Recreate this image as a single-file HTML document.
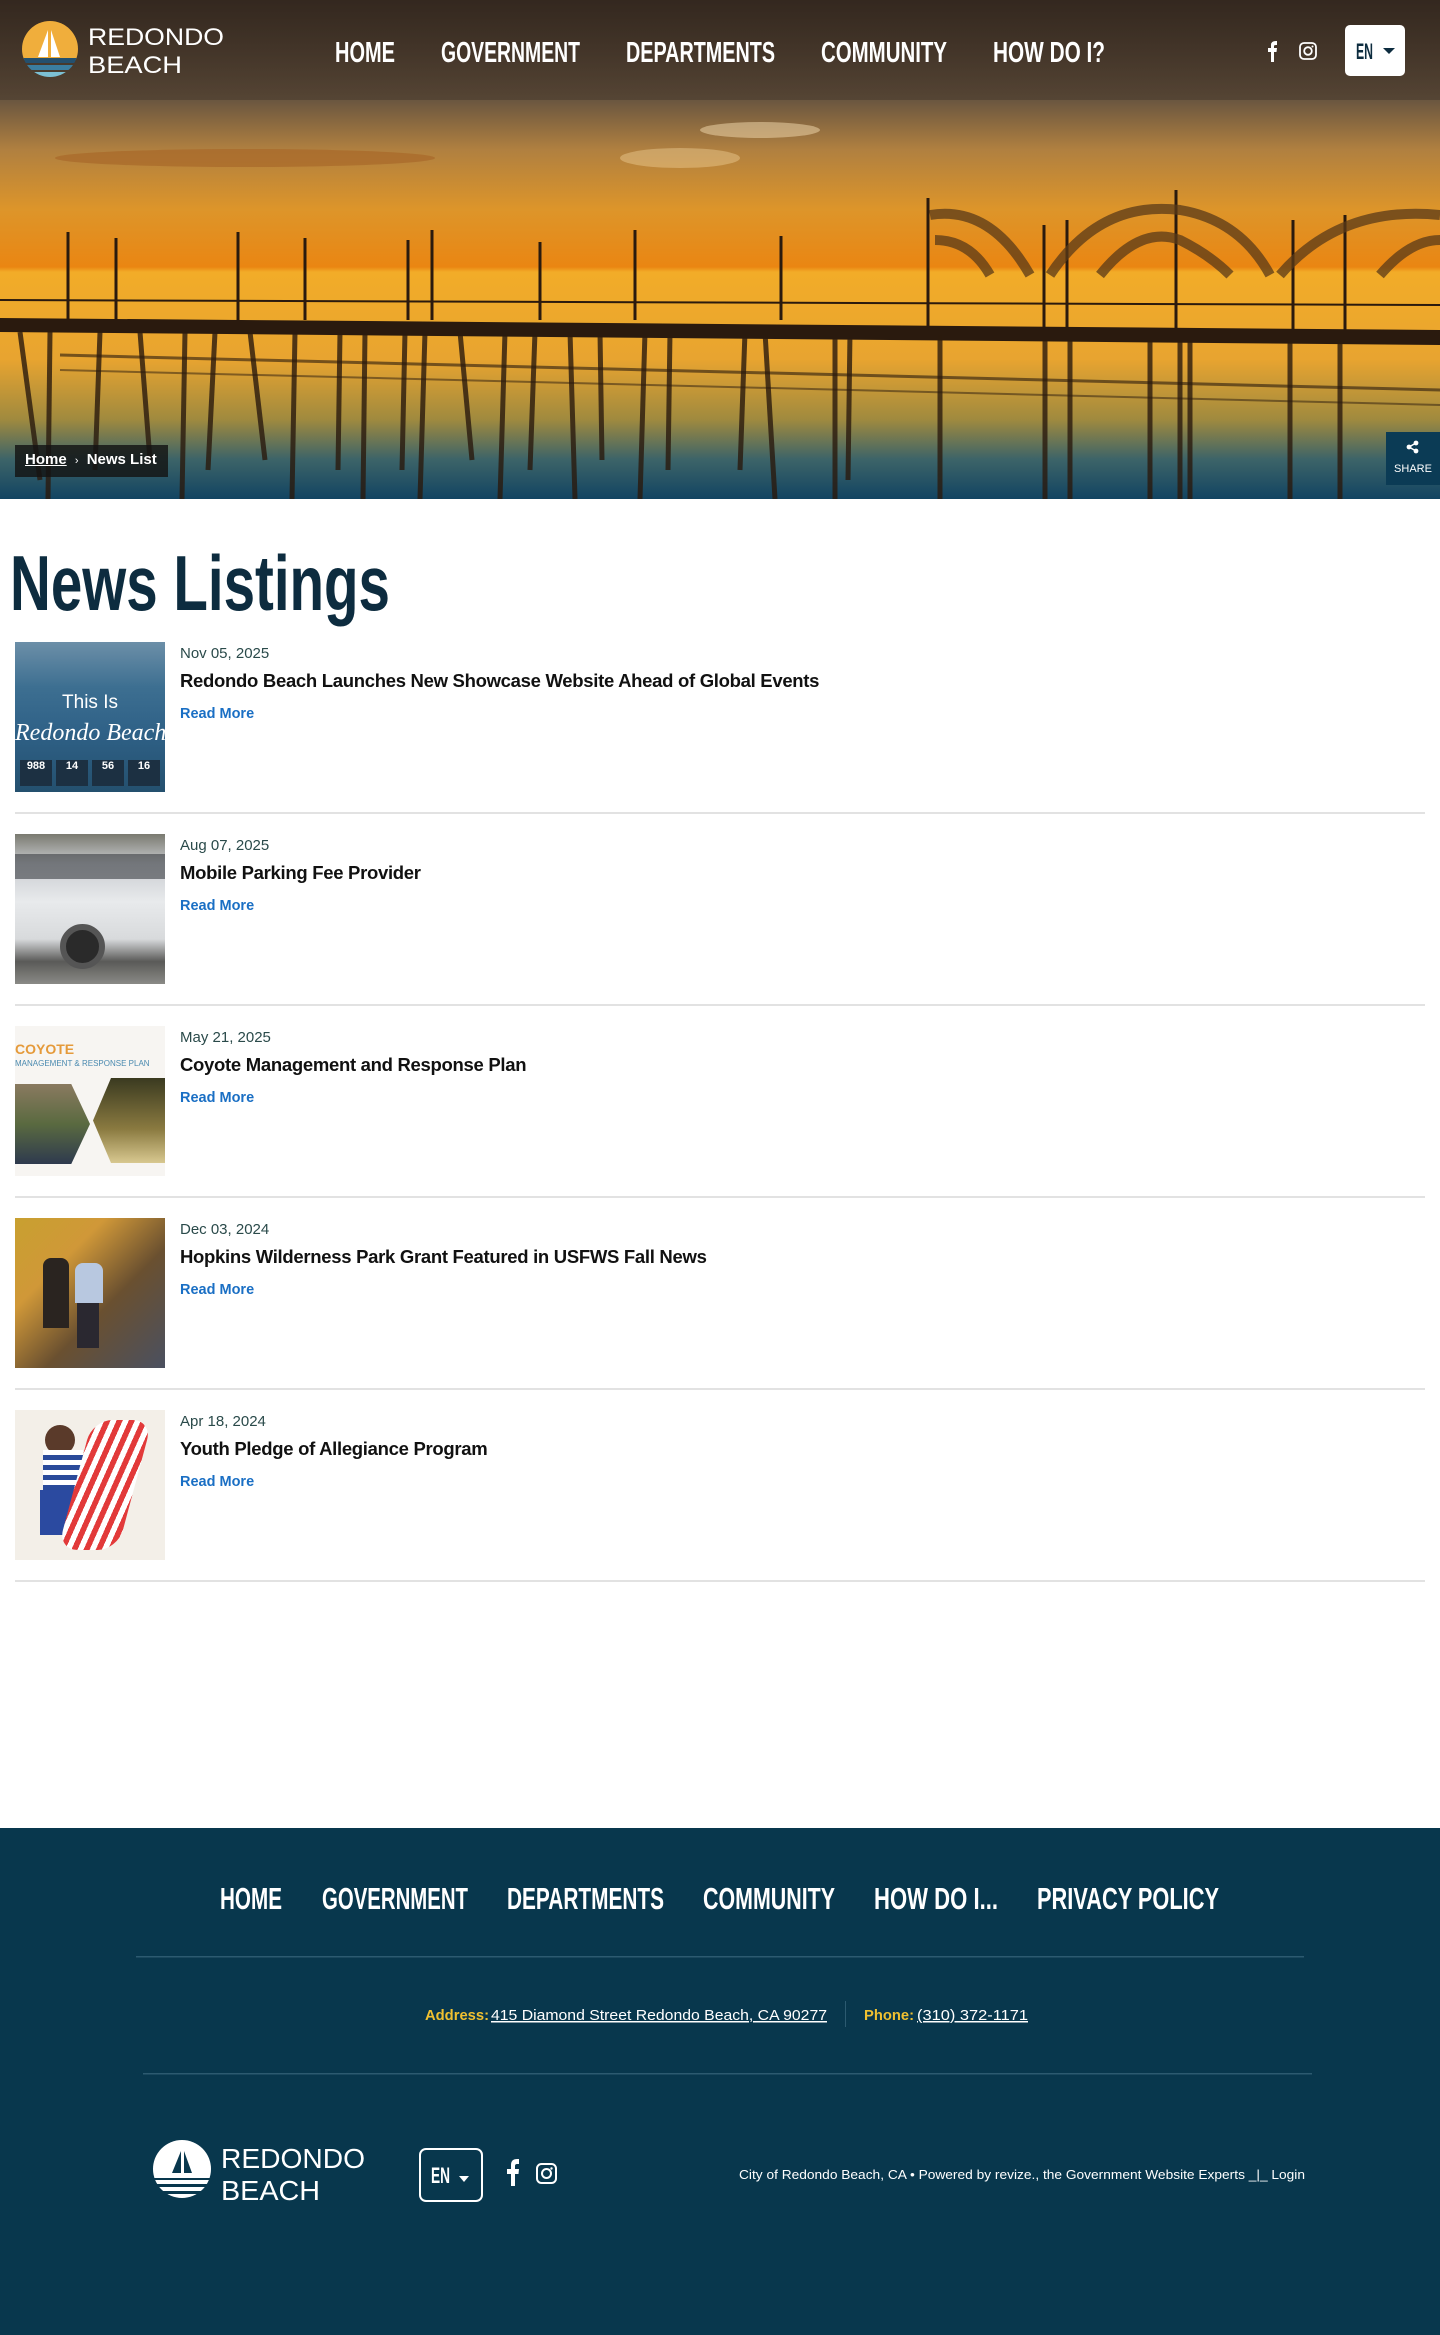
<!DOCTYPE html>
<html><head><meta charset="utf-8">
<style>
*{margin:0;padding:0;box-sizing:border-box}
body{width:1440px;height:2335px;position:relative;background:#fff;font-family:"Liberation Sans",sans-serif;overflow:hidden}
.abs{position:absolute}
.item{position:absolute;left:15px;width:1410px;height:172px;border-bottom:2px solid #e2e2e2}
.thumb{position:absolute;left:0;top:0;width:150px;height:150px;overflow:hidden}
.date{position:absolute;left:165px;top:3px;font-size:15px;color:#2a4a4a}
.ttl{position:absolute;left:165px;top:28px;font-size:18.5px;color:#111;font-weight:bold;letter-spacing:-.3px}
.rm{position:absolute;left:165px;top:64px;font-size:14.5px;color:#1a6fc4;font-weight:bold}
</style></head><body>

<!-- HERO -->
<svg class="abs" style="left:0;top:0" width="1440" height="499" viewBox="0 0 1440 499">
<defs>
<linearGradient id="sky" x1="0" y1="0" x2="0" y2="1">
<stop offset="0" stop-color="#3e2f24"/><stop offset=".2" stop-color="#6a5640"/><stop offset=".3" stop-color="#b08040"/><stop offset=".42" stop-color="#dd952a"/><stop offset=".535" stop-color="#ea8612"/><stop offset=".545" stop-color="#f2ac28"/><stop offset=".72" stop-color="#e8a430"/><stop offset=".84" stop-color="#a08a3e"/><stop offset=".92" stop-color="#3d6468"/><stop offset="1" stop-color="#124462"/>
</linearGradient>
</defs>
<rect width="1440" height="499" fill="url(#sky)"/>
<ellipse cx="245" cy="158" rx="190" ry="9" fill="#a8682a" opacity=".7"/>
<ellipse cx="760" cy="130" rx="60" ry="8" fill="#f3dcb0" opacity=".5"/>
<ellipse cx="680" cy="158" rx="60" ry="10" fill="#f5d8a0" opacity=".4"/>
<g stroke="#2a1a0e" fill="none">
<g stroke-width="3">
<line x1="68" y1="232" x2="68" y2="320"/><line x1="116" y1="238" x2="116" y2="320"/><line x1="238" y1="232" x2="238" y2="320"/><line x1="305" y1="238" x2="305" y2="320"/><line x1="408" y1="240" x2="408" y2="320"/><line x1="432" y1="230" x2="432" y2="320"/><line x1="540" y1="242" x2="540" y2="320"/><line x1="635" y1="230" x2="635" y2="320"/><line x1="781" y1="236" x2="781" y2="320"/>
<line x1="928" y1="198" x2="928" y2="330"/><line x1="1176" y1="190" x2="1176" y2="335"/><line x1="1044" y1="225" x2="1044" y2="330"/><line x1="1067" y1="220" x2="1067" y2="330"/><line x1="1293" y1="220" x2="1293" y2="335"/><line x1="1345" y1="215" x2="1345" y2="335"/>
</g>
<g stroke-width="10" stroke="#5a3a18" opacity=".75">
<path d="M930 215 Q990 205 1030 275"/><path d="M1050 275 Q1100 200 1180 210 Q1240 220 1270 275"/><path d="M1280 275 Q1340 205 1440 215"/>
<path d="M935 240 Q970 240 990 275"/><path d="M1100 275 Q1140 225 1180 240 Q1210 255 1230 275"/><path d="M1380 275 Q1410 240 1440 240"/>
</g>
<line x1="0" y1="300" x2="1440" y2="305" stroke-width="2"/>
<path d="M0 318 L1440 330 L1440 345 L0 332 Z" fill="#2a1a0e" stroke="none"/>
<path d="M60 355 L1440 390" stroke-width="3" opacity=".6"/>
<path d="M60 370 L1440 405" stroke-width="2" opacity=".5"/>
<g stroke-width="5" opacity=".8">
<line x1="20" y1="332" x2="40" y2="480"/><line x1="50" y1="332" x2="48" y2="499"/><line x1="100" y1="332" x2="95" y2="470"/><line x1="140" y1="332" x2="150" y2="460"/><line x1="185" y1="332" x2="182" y2="499"/><line x1="215" y1="332" x2="208" y2="470"/><line x1="250" y1="332" x2="265" y2="460"/><line x1="295" y1="332" x2="292" y2="499"/><line x1="340" y1="332" x2="338" y2="470"/><line x1="365" y1="332" x2="363" y2="499"/><line x1="405" y1="332" x2="402" y2="470"/><line x1="425" y1="332" x2="420" y2="499"/><line x1="460" y1="332" x2="472" y2="460"/><line x1="505" y1="332" x2="500" y2="499"/><line x1="535" y1="332" x2="530" y2="470"/><line x1="570" y1="332" x2="575" y2="499"/><line x1="600" y1="332" x2="602" y2="460"/><line x1="645" y1="332" x2="640" y2="499"/><line x1="670" y1="332" x2="668" y2="470"/><line x1="745" y1="332" x2="740" y2="470"/><line x1="765" y1="332" x2="775" y2="499"/><line x1="835" y1="332" x2="835" y2="499"/><line x1="850" y1="332" x2="848" y2="480"/><line x1="940" y1="335" x2="940" y2="499"/><line x1="1045" y1="335" x2="1045" y2="499"/><line x1="1070" y1="335" x2="1070" y2="499"/><line x1="1150" y1="338" x2="1150" y2="499"/><line x1="1180" y1="338" x2="1180" y2="499"/><line x1="1190" y1="338" x2="1190" y2="499"/><line x1="1290" y1="340" x2="1290" y2="499"/><line x1="1340" y1="340" x2="1340" y2="499"/>
</g>
</g>
</svg>

<!-- header overlay -->
<div class="abs" style="left:0;top:0;width:1440px;height:100px;background:linear-gradient(rgba(45,35,28,.6),rgba(60,48,38,.45))"></div>
<svg class="abs" style="left:0;top:0" width="240" height="100">
<defs><clipPath id="c"><circle cx="50" cy="49" r="28"/></clipPath></defs>
<g clip-path="url(#c)"><rect x="20" y="20" width="60" height="40" fill="#f0ae3c"/>
<rect x="20" y="58" width="60" height="5" fill="#24506e"/><rect x="20" y="65" width="60" height="5" fill="#3b7ea0"/><rect x="20" y="72" width="60" height="8" fill="#7cc0d4"/></g>
<path d="M48 30 L48 57 L38 57 Z" fill="#fff"/><path d="M51 30 L60 57 L51 57 Z" fill="#fff"/>
<text x="88" y="45" fill="#fff" font-family="Liberation Sans" font-size="24" textLength="136" lengthAdjust="spacingAndGlyphs">REDONDO</text>
<text x="88" y="73" fill="#fff" font-family="Liberation Sans" font-size="24" textLength="94" lengthAdjust="spacingAndGlyphs">BEACH</text>
</svg>
<svg class="abs" style="left:0;top:0" width="1440" height="100" font-family="Liberation Sans" font-weight="bold" font-size="29" fill="#fff">
<text x="335" y="62" textLength="60" lengthAdjust="spacingAndGlyphs">HOME</text>
<text x="441" y="62" textLength="139" lengthAdjust="spacingAndGlyphs">GOVERNMENT</text>
<text x="626" y="62" textLength="149" lengthAdjust="spacingAndGlyphs">DEPARTMENTS</text>
<text x="821" y="62" textLength="126" lengthAdjust="spacingAndGlyphs">COMMUNITY</text>
<text x="993" y="62" textLength="112" lengthAdjust="spacingAndGlyphs">HOW DO I?</text>
<path d="M1271 62 V52 H1268 V48 H1271 V45 Q1271 41 1276 41 H1277 V45 H1276 Q1274 45 1274 46 V48 H1277 L1276.5 52 H1274 V62 Z"/>
<rect x="1300" y="43" width="16" height="16" rx="4" fill="none" stroke="#fff" stroke-width="1.8"/>
<circle cx="1308" cy="51" r="3.8" fill="none" stroke="#fff" stroke-width="1.8"/><circle cx="1312.5" cy="46.5" r="1" />
<rect x="1345" y="25" width="60" height="51" rx="5" fill="#fff"/>
<text x="1356" y="59" fill="#0d2c3f" font-size="22" textLength="17" lengthAdjust="spacingAndGlyphs">EN</text>
<path d="M1383 48 L1395 48 L1389 54 Z" fill="#0d2c3f"/>
</svg>

<!-- breadcrumb -->
<div class="abs" style="left:15px;top:445px;width:153px;height:32px;background:rgba(20,20,20,.82)"></div>
<div class="abs" style="left:25px;top:451px;font-size:15px;color:#fff;font-weight:bold;white-space:nowrap"><span style="text-decoration:underline">Home</span> <span style="font-size:11px;font-weight:normal;padding:0 4px">›</span> News List</div>
<div class="abs" style="left:1386px;top:432px;width:54px;height:53px;background:#0b3b55"></div>
<svg class="abs" style="left:1406px;top:440px" width="14" height="14"><circle cx="10" cy="3" r="2.4" fill="#fff"/><circle cx="3" cy="7" r="2.4" fill="#fff"/><circle cx="10" cy="11" r="2.4" fill="#fff"/><path d="M10 3 L3 7 L10 11" stroke="#fff" stroke-width="1.5" fill="none"/></svg>
<div class="abs" style="left:1386px;top:463px;width:54px;text-align:center;font-size:11px;color:#fff">SHARE</div>

<!-- Title -->
<svg class="abs" style="left:0;top:530px" width="500" height="100">
<text x="10" y="80" font-family="Liberation Sans" font-weight="bold" font-size="78" fill="#0d2c3f" textLength="380" lengthAdjust="spacingAndGlyphs">News Listings</text>
</svg>

<!-- items -->
<div class="item" style="top:642px">
<div class="thumb" style="background:linear-gradient(#6c8fa8 0,#3d6f91 30%,#2f6187 60%,#24506e 100%)">
<div style="position:absolute;left:0;top:50px;width:150px;text-align:center;color:#fff;font-size:19px">This Is</div>
<div style="position:absolute;left:0;top:78px;width:150px;color:#fff;font-size:24px;font-style:italic;font-family:'Liberation Serif',serif;white-space:nowrap">Redondo Beach</div>
<div style="position:absolute;left:5px;top:118px;width:140px;height:26px;display:flex;gap:4px">
<div style="flex:1;background:#1c3042;color:#fff;font-size:11px;text-align:center;font-weight:bold">988</div><div style="flex:1;background:#1c3042;color:#fff;font-size:11px;text-align:center;font-weight:bold">14</div><div style="flex:1;background:#1c3042;color:#fff;font-size:11px;text-align:center;font-weight:bold">56</div><div style="flex:1;background:#1c3042;color:#fff;font-size:11px;text-align:center;font-weight:bold">16</div></div>
</div>
<div class="date">Nov 05, 2025</div><div class="ttl">Redondo Beach Launches New Showcase Website Ahead of Global Events</div><div class="rm">Read More</div>
</div>

<div class="item" style="top:834px">
<div class="thumb" style="background:linear-gradient(#7a7a70 0,#c9ccd0 20%,#e8eaec 45%,#d8dadc 70%,#5a5a58 85%,#8a8a86 100%)">
<div style="position:absolute;left:45px;top:90px;width:45px;height:45px;border-radius:50%;background:#2a2a2a;border:6px solid #555"></div>
<div style="position:absolute;left:0;top:20px;width:150px;height:25px;background:#3a3d42;opacity:.6"></div>
</div>
<div class="date">Aug 07, 2025</div><div class="ttl">Mobile Parking Fee Provider</div><div class="rm">Read More</div>
</div>

<div class="item" style="top:1026px">
<div class="thumb" style="background:#f7f5f2">
<div style="position:absolute;left:0;top:15px;font-size:14px;color:#e59a3a;font-weight:bold">COYOTE</div>
<div style="position:absolute;left:0;top:33px;font-size:8px;color:#4a8ab0;white-space:nowrap">MANAGEMENT &amp; RESPONSE PLAN</div>
<div style="position:absolute;left:0;top:58px;width:75px;height:80px;background:linear-gradient(#8a7a60,#5a6a40 50%,#2e3a4e 100%);clip-path:polygon(0 0,75% 0,100% 50%,75% 100%,0 100%)"></div>
<div style="position:absolute;left:78px;top:52px;width:72px;height:85px;background:linear-gradient(#3a3a20,#8a7a40 60%,#d8c890);clip-path:polygon(25% 0,100% 0,100% 100%,25% 100%,0 50%)"></div>
</div>
<div class="date">May 21, 2025</div><div class="ttl">Coyote Management and Response Plan</div><div class="rm">Read More</div>
</div>

<div class="item" style="top:1218px">
<div class="thumb" style="background:linear-gradient(135deg,#c8a030 0,#d09838 30%,#6a5030 60%,#4a5060 100%)">
<div style="position:absolute;left:28px;top:40px;width:26px;height:70px;background:#2a2420;border-radius:8px 8px 0 0"></div>
<div style="position:absolute;left:60px;top:45px;width:28px;height:40px;background:#b8c8e0;border-radius:8px 8px 0 0"></div>
<div style="position:absolute;left:62px;top:85px;width:22px;height:45px;background:#2a2830"></div>
</div>
<div class="date">Dec 03, 2024</div><div class="ttl">Hopkins Wilderness Park Grant Featured in USFWS Fall News</div><div class="rm">Read More</div>
</div>

<div class="item" style="top:1410px">
<div class="thumb" style="background:#f3efe8">
<div style="position:absolute;left:30px;top:15px;width:30px;height:30px;border-radius:50%;background:#5a3a2a"></div>
<div style="position:absolute;left:28px;top:40px;width:40px;height:40px;background:repeating-linear-gradient(#fff 0 5px,#2a4a9a 5px 10px)"></div>
<div style="position:absolute;left:25px;top:80px;width:55px;height:45px;background:#2b4aa0"></div>
<div style="position:absolute;left:60px;top:10px;width:60px;height:130px;background:repeating-linear-gradient(100deg,#e23a3a 0 6px,#fff 6px 12px);transform:skewX(-15deg);border-radius:20px"></div>
</div>
<div class="date">Apr 18, 2024</div><div class="ttl">Youth Pledge of Allegiance Program</div><div class="rm">Read More</div>
</div>

<!-- FOOTER -->
<div class="abs" style="left:0;top:1828px;width:1440px;height:507px;background:#08374d"></div>
<svg class="abs" style="left:0;top:1828px" width="1440" height="507" font-family="Liberation Sans" font-weight="bold" fill="#fff">
<g font-size="31">
<text x="220" y="81" textLength="62" lengthAdjust="spacingAndGlyphs">HOME</text>
<text x="322" y="81" textLength="146" lengthAdjust="spacingAndGlyphs">GOVERNMENT</text>
<text x="507" y="81" textLength="157" lengthAdjust="spacingAndGlyphs">DEPARTMENTS</text>
<text x="703" y="81" textLength="132" lengthAdjust="spacingAndGlyphs">COMMUNITY</text>
<text x="874" y="81" textLength="124" lengthAdjust="spacingAndGlyphs">HOW DO I...</text>
<text x="1037" y="81" textLength="182" lengthAdjust="spacingAndGlyphs">PRIVACY POLICY</text>
</g>
<rect x="136" y="128" width="1168" height="1.5" fill="#2c5a70"/>
<rect x="143" y="245" width="1169" height="1.5" fill="#2c5a70"/>
<rect x="845" y="173" width="1" height="26" fill="#2c5a70"/>
<g font-size="15" font-weight="normal">
<text x="425" y="192" fill="#f0c030" font-weight="bold" textLength="64" lengthAdjust="spacingAndGlyphs">Address:</text>
<text x="491" y="192" text-decoration="underline" textLength="336" lengthAdjust="spacingAndGlyphs">415 Diamond Street Redondo Beach, CA 90277</text>
<text x="864" y="192" fill="#f0c030" font-weight="bold" textLength="50" lengthAdjust="spacingAndGlyphs">Phone:</text>
<text x="917" y="192" text-decoration="underline" textLength="111" lengthAdjust="spacingAndGlyphs">(310) 372-1171</text>
</g>
<defs><clipPath id="c2"><circle cx="182" cy="341" r="29"/></clipPath></defs>
<g clip-path="url(#c2)"><rect x="150" y="310" width="70" height="40" fill="#fff"/><rect x="150" y="352" width="70" height="4" fill="#fff"/><rect x="150" y="359" width="70" height="4" fill="#fff"/><rect x="150" y="366" width="70" height="10" fill="#fff"/></g>
<path d="M181 323 L181 345 L172 345 Z M184 323 L192 345 L184 345 Z" fill="#08374d"/>
<g font-weight="normal" font-size="28">
<text x="221" y="340" textLength="144" lengthAdjust="spacingAndGlyphs">REDONDO</text>
<text x="221" y="372" textLength="99" lengthAdjust="spacingAndGlyphs">BEACH</text>
</g>
<rect x="420" y="321" width="62" height="52" rx="6" fill="none" stroke="#fff" stroke-width="2"/>
<text x="431" y="355" font-size="22" textLength="19" lengthAdjust="spacingAndGlyphs">EN</text>
<path d="M459 348 L469 348 L464 354 Z"/>
<path d="M511 358 V346 H507 V341 H511 V337 Q511 331 517 331 H519 V336 H517 Q515 336 515 338 V341 H519 L518.5 346 H515 V358 Z"/>
<rect x="537" y="336" width="19" height="19" rx="4.5" fill="none" stroke="#fff" stroke-width="2"/>
<circle cx="546.5" cy="345.5" r="4.5" fill="none" stroke="#fff" stroke-width="2"/><circle cx="551.5" cy="340.5" r="1.2"/>
<g font-weight="normal" font-size="13">
<text x="739" y="351" textLength="566" lengthAdjust="spacingAndGlyphs">City of Redondo Beach, CA  •  Powered by revize., the Government Website Experts  _|_ Login</text>
</g>
</svg>
</body></html>
